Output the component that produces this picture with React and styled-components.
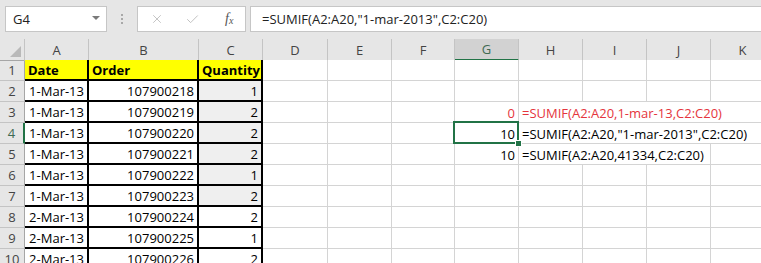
import styled, { createGlobalStyle, css } from 'styled-components'
import { X, Check } from 'lucide-react'

const GlobalStyle = createGlobalStyle`
    html, body {
        margin: 0;
        padding: 0;
        background: #ffffff;
        overflow: hidden;
        font-family: "Open Sans", "Liberation Sans", sans-serif;
    }
`;

const Window = styled.div`
    width: 761px;
    height: 263px;
    overflow: hidden;
    background: #ffffff;
`;

const FormulaBar = styled.div`
    height: 39px;
    box-sizing: border-box;
    padding: 6px 0 0 5px;
    background: #e6e6e6;
    display: flex;
    align-items: flex-start;
`;

const NameBox = styled.div`
    width: 102px;
    height: 26px;
    box-sizing: border-box;
    background: #fff;
    border: 1px solid #c6c6c6;
    display: flex;
    align-items: center;
    justify-content: space-between;
    padding: 0 6px 0 7px;
    font-size: 13px;
    color: #222;
`;

const DropArrow = styled.span`
    width: 0;
    height: 0;
    border-left: 4px solid transparent;
    border-right: 4px solid transparent;
    border-top: 4px solid #7a7a7a;
    margin-top: -2px;
`;

const Grip = styled.div`
    width: 30px;
    height: 26px;
    display: flex;
    flex-direction: column;
    align-items: center;
    justify-content: center;
    gap: 2px;

    span {
        width: 2px;
        height: 2px;
        background: #a8a8a8;
    }
`;

const FuncBox = styled.div`
    width: 109px;
    height: 26px;
    box-sizing: border-box;
    background: #fff;
    border: 1px solid #c6c6c6;
    display: flex;
    align-items: center;
    padding: 0 10px 0 12px;
    gap: 21px;
    color: #bdbdbd;
`;

const Fx = styled.span`
    margin-left: 4px;
    font-family: "Liberation Serif", serif;
    font-style: italic;
    font-size: 14px;
    color: #555;

    sub {
        font-size: 10px;
        vertical-align: baseline;
        position: relative;
        top: 1px;
    }
`;

const FormulaInput = styled.div`
    flex: 1;
    height: 26px;
    margin-left: 4px;
    box-sizing: border-box;
    background: #fff;
    border: 1px solid #c6c6c6;
    border-right: none;
    display: flex;
    align-items: center;
    padding-left: 11px;
    font-size: 13px;
    color: #222;
    white-space: nowrap;
`;

const Grid = styled.div`
    display: grid;
    grid-template-columns: 25px 64px 110px 64px 65px 64px 63px 64px 64px 64px 64px 64px;
    grid-auto-rows: 21px;
    width: 775px;
    font-size: 13px;
    color: #000;
`;

const Corner = styled.div`
    height: 22px;
    box-sizing: border-box;
    background: #e6e6e6;
    border-right: 1px solid #c4c4c4;
    border-bottom: 1px solid #a6a6a6;
    position: relative;

    &::after {
        content: '';
        position: absolute;
        right: 3px;
        bottom: 3px;
        border-left: 11px solid transparent;
        border-bottom: 11px solid #b9b9b9;
    }
`;

const ColHead = styled.div`
    height: 22px;
    box-sizing: border-box;
    background: ${p => (p.$active ? '#d2d2d2' : '#e6e6e6')};
    border-right: 1px solid #c4c4c4;
    border-bottom: ${p => (p.$active ? '2px solid #217346' : '1px solid #a6a6a6')};
    display: flex;
    align-items: center;
    justify-content: center;
    font-size: 13px;
    color: ${p => (p.$active ? '#3f6a52' : '#444')};
`;

const RowHead = styled.div`
    box-sizing: border-box;
    background: #e6e6e6;
    border-right: ${p => (p.$active ? '2px solid #217346' : '1px solid #a6a6a6')};
    border-bottom: 1px solid #c4c4c4;
    display: flex;
    align-items: center;
    justify-content: center;
    font-size: 13px;
    color: ${p => (p.$active ? '#3f6a52' : '#444')};
`;

const Cell = styled.div`
    box-sizing: border-box;
    border-right: 1px solid #d4d4d4;
    border-bottom: 1px solid #d4d4d4;
    background: ${p => p.$fill || '#ffffff'};
    display: flex;
    align-items: center;
    justify-content: ${p => (p.$right ? 'flex-end' : 'flex-start')};
    padding: 1px 3px 0 3px;
    white-space: nowrap;
    font-weight: ${p => (p.$bold ? 700 : 400)};
    color: ${p => p.$color || '#000'};
    grid-column: ${p => (p.$span ? `span ${p.$span}` : 'auto')};
    position: relative;

    ${p => p.$thick && css`
        border-right: 2px solid #000;
        border-bottom: 2px solid #000;
    `}

    ${p => p.$selected && css`
        &::after {
            content: '';
            position: absolute;
            left: -2px;
            top: -2px;
            right: -1px;
            bottom: -1px;
            border: 2px solid #217346;
        }
        &::before {
            content: '';
            position: absolute;
            right: -4px;
            bottom: -4px;
            width: 5px;
            height: 5px;
            background: #217346;
            border: 1px solid #fff;
            z-index: 1;
        }
    `}
`;

const columns = ['A', 'B', 'C', 'D', 'E', 'F', 'G', 'H', 'I', 'J', 'K'];

const orders = [
    ['1-Mar-13', '107900218', '1'],
    ['1-Mar-13', '107900219', '2'],
    ['1-Mar-13', '107900220', '2'],
    ['1-Mar-13', '107900221', '2'],
    ['1-Mar-13', '107900222', '1'],
    ['1-Mar-13', '107900223', '2'],
    ['2-Mar-13', '107900224', '2'],
    ['2-Mar-13', '107900225', '1'],
    ['2-Mar-13', '107900226', '2'],
];

// formulas typed in G/H, keyed by row number
const results = {
    3: { value: '0', text: '=SUMIF(A2:A20,1-mar-13,C2:C20)', span: 4, color: '#e5353d' },
    4: { value: '10', text: '=SUMIF(A2:A20,"1-mar-2013",C2:C20)', span: 4, selected: true },
    5: { value: '10', text: '=SUMIF(A2:A20,41334,C2:C20)', span: 3 },
};

function RestOfRow({ row }) {
    const r = results[row];
    if (!r) {
        return columns.slice(3).map(c => <Cell key={c} />);
    }
    const tail = 4 - r.span;
    return (
        <>
            <Cell />
            <Cell />
            <Cell />
            <Cell $right $color={r.color} $selected={r.selected}>{r.value}</Cell>
            <Cell $span={r.span} $color={r.color}>{r.text}</Cell>
            {Array.from({ length: tail }).map((_, i) => <Cell key={i} />)}
        </>
    );
}

export default function App() {
    return (
        <Window>
            <GlobalStyle />
            <FormulaBar>
                <NameBox>
                    G4
                    <DropArrow />
                </NameBox>
                <Grip><span /><span /><span /></Grip>
                <FuncBox>
                    <X size={14} strokeWidth={1.5} />
                    <Check size={15} strokeWidth={1.5} />
                    <Fx>f<sub>x</sub></Fx>
                </FuncBox>
                <FormulaInput>=SUMIF(A2:A20,"1-mar-2013",C2:C20)</FormulaInput>
            </FormulaBar>

            <Grid>
                <Corner />
                {columns.map(c => (
                    <ColHead key={c} $active={c === 'G'}>{c}</ColHead>
                ))}

                <RowHead>1</RowHead>
                <Cell $thick $bold $fill="#ffff00">Date</Cell>
                <Cell $thick $bold $fill="#ffff00">Order</Cell>
                <Cell $thick $bold $fill="#ffff00">Quantity</Cell>
                <RestOfRow row={1} />

                {orders.map(([date, order, qty], i) => {
                    const row = i + 2;
                    return (
                        <div key={row} style={{ display: 'contents' }}>
                            <RowHead $active={row === 4}>{row}</RowHead>
                            <Cell $thick $right>{date}</Cell>
                            <Cell $thick $right>{order}</Cell>
                            <Cell $thick $right $fill={row <= 7 ? '#efefef' : '#ffffff'}>{qty}</Cell>
                            <RestOfRow row={row} />
                        </div>
                    );
                })}
            </Grid>
        </Window>
    );
}
